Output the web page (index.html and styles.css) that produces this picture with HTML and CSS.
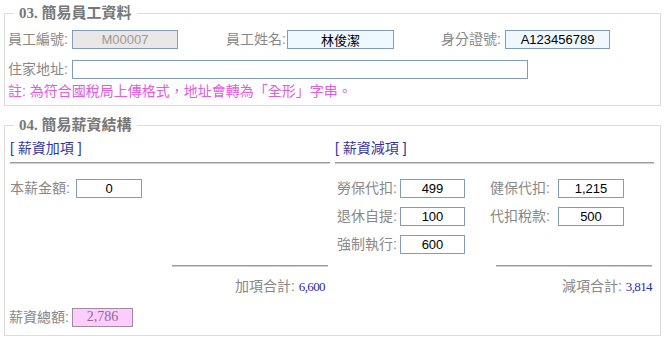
FILE: index.html
```html
<!DOCTYPE html>
<html lang="zh-Hant">
<head>
    <meta charset="UTF-8">
    <meta name="viewport" content="width=device-width, initial-scale=1.0">
    <title>簡易員工資料</title>
    <link rel="stylesheet" href="styles.css">
</head>
<body>
    <fieldset class="box box-emp">
        <legend>03. 簡易員工資料</legend>
        <div class="row">
            <label class="lbl w64">員工編號:</label>
            <input class="fld fld-ro w106" type="text" value="M00007" readonly>
            <label class="lbl w61 gap48">員工姓名:</label>
            <input class="fld fld-blue w107" type="text" value="林俊潔">
            <label class="lbl w64 gap47">身分證號:</label>
            <input class="fld fld-blue w105" type="text" value="A123456789">
        </div>
        <div class="row">
            <label class="lbl w64">住家地址:</label>
            <input class="fld fld-addr" type="text" value="">
        </div>
        <div class="note">註: 為符合國稅局上傳格式，地址會轉為「全形」字串。</div>
    </fieldset>

    <fieldset class="box box-pay">
        <legend>04. 簡易薪資結構</legend>
        <div class="cols">
            <div class="col">
                <div class="sec-title">[ 薪資加項 ]</div>
                <div class="sec-line"></div>
                <div class="sec-rows">
                    <div class="prow">
                        <label class="lbl w66">本薪金額:</label>
                        <input class="fld w66" type="text" value="0">
                    </div>
                </div>
                <div class="sum-line"></div>
                <div class="sum sum-add">加項合計: <span class="amt">6,600</span></div>
            </div>
            <div class="col">
                <div class="sec-title">[ 薪資減項 ]</div>
                <div class="sec-line"></div>
                <div class="sec-rows sub-rows">
                    <div class="prow">
                        <label class="lbl w63">勞保代扣:</label>
                        <input class="fld w65" type="text" value="499">
                        <label class="lbl w68 gap25">健保代扣:</label>
                        <input class="fld w66" type="text" value="1,215">
                    </div>
                    <div class="prow">
                        <label class="lbl w63">退休自提:</label>
                        <input class="fld w65" type="text" value="100">
                        <label class="lbl w68 gap25">代扣稅款:</label>
                        <input class="fld w66" type="text" value="500">
                    </div>
                    <div class="prow">
                        <label class="lbl w63">強制執行:</label>
                        <input class="fld w65" type="text" value="600">
                    </div>
                </div>
                <div class="sum-line"></div>
                <div class="sum sum-sub">減項合計: <span class="amt">3,814</span></div>
            </div>
        </div>
        <div class="prow total-row">
            <label class="lbl w63">薪資總額:</label>
            <input class="fld fld-total" type="text" value="2,786" readonly>
        </div>
    </fieldset>
</body>
</html>
```

FILE: styles.css
```css
* {
    box-sizing: border-box;
}

body {
    margin: 0;
    padding-top: 4px;
    background-color: #ffffff;
    font-family: "Liberation Sans", "Noto Sans CJK TC", sans-serif;
    font-size: 14px;
    color: #888888;
}

fieldset.box {
    margin: 0 5px 0 4px;
    border: 1px solid #dcdcdc;
    min-width: 0;
}

legend {
    margin-left: 6px;
    padding: 0 5px;
    font-family: "Liberation Serif", "Noto Sans CJK TC", serif;
    font-weight: bold;
    font-size: 15px;
    line-height: 18px;
    color: #777777;
}

fieldset.box-emp {
    padding: 2px 3px 7px;
}

fieldset.box-pay {
    margin-top: 10px;
    padding: 0 3px 4px;
}

.row {
    display: flex;
    align-items: center;
    height: 30px;
}

.prow {
    display: flex;
    align-items: center;
    height: 28px;
}

.lbl {
    flex: none;
    line-height: 16px;
    white-space: nowrap;
}

.fld {
    flex: none;
    height: 19px;
    margin: 0;
    padding: 0;
    border: 1px solid #7f9db9;
    background-color: #ffffff;
    font-family: "Liberation Sans", "Noto Sans CJK TC", sans-serif;
    font-size: 13px;
    color: #000000;
    text-align: center;
    outline: none;
}

.fld-ro {
    background-color: #ebe7e7;
    color: #9a9a9a;
}

.fld-blue {
    background-color: #f0f8ff;
}

.fld-addr {
    width: 456px;
}

.fld-total {
    width: 61px;
    background-color: #ffccff;
    border-color: #9d8c9d;
    font-family: "Liberation Serif", serif;
    font-size: 14px;
    color: #8a6e8a;
}

.w61 { width: 61px; }
.w63 { width: 63px; }
.w64 { width: 64px; }
.w65 { width: 65px; }
.w66 { width: 66px; }
.w68 { width: 68px; }
.w105 { width: 105px; }
.w106 { width: 106px; }
.w107 { width: 107px; }

.gap25 { margin-left: 25px; }
.gap47 { margin-left: 47px; }
.gap48 { margin-left: 48px; }

.note {
    line-height: 14px;
    color: #e35ae3;
}

.cols {
    display: grid;
    grid-template-columns: 325px 1fr;
}

.col {
    padding: 0 3px 0 2px;
}

.sec-title {
    margin-top: 6px;
    line-height: 16px;
    color: #3434a4;
}

.sec-line,
.sum-line {
    height: 2px;
    border-top: 1px solid #9a9a9a;
    border-bottom: 1px solid #cfcfcf;
}

.sec-line {
    margin-top: 6px;
}

.sec-rows {
    height: 84px;
    margin-top: 10px;
}

.sub-rows {
    padding-left: 2px;
}

.sum-line {
    width: 156px;
    margin: 7px 2px 0 auto;
}

.sum {
    margin-top: 11px;
    line-height: 16px;
    text-align: right;
}

.sum-add {
    padding-right: 5px;
}

.sum-sub {
    padding-right: 2px;
}

.amt {
    font-family: "Liberation Serif", serif;
    font-size: 13px;
    letter-spacing: -0.6px;
    color: #2a2ab0;
}

.total-row {
    margin-top: 8px;
    padding-left: 1px;
}
```
